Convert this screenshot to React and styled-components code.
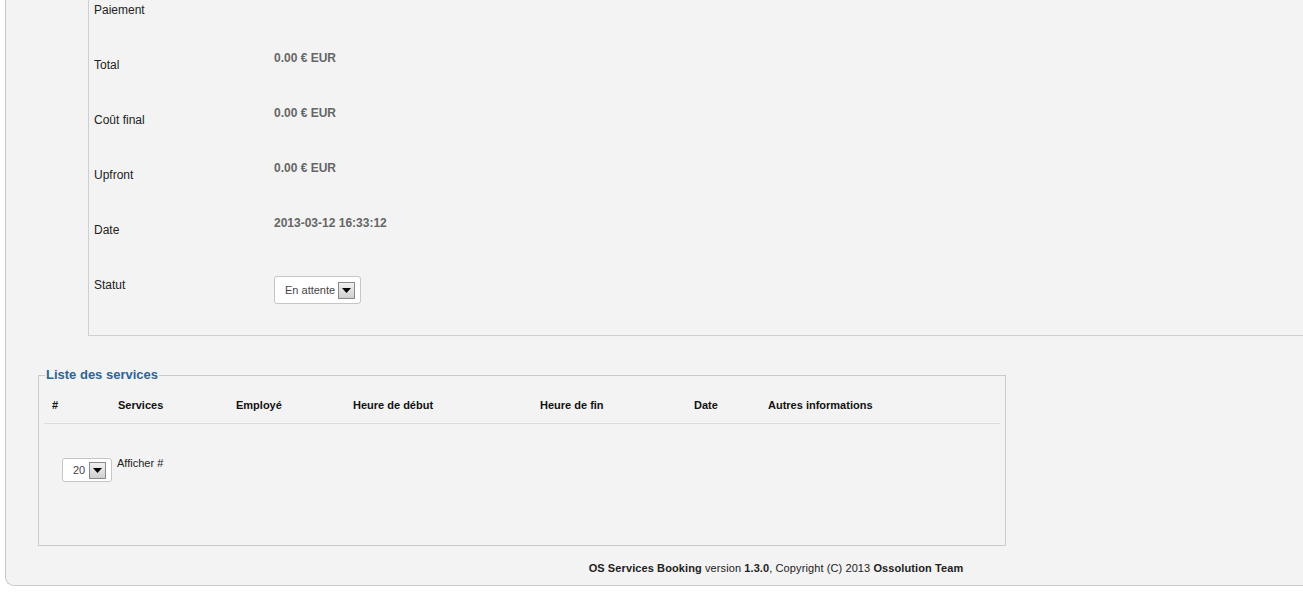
import React from 'react';
import styled, { createGlobalStyle } from 'styled-components';

const GlobalStyle = createGlobalStyle`
  html, body {
    margin: 0;
    padding: 0;
    background: #fff;
    overflow: hidden;
  }
  body {
    font-family: "Liberation Sans", Arial, sans-serif;
    color: #222;
  }
`;

const Panel = styled.div`
  margin-left: 5px;
  width: 1540px;
  background: #f3f3f3;
  border-left: 1px solid #c9c9c9;
  border-bottom: 1px solid #c9c9c9;
  border-bottom-left-radius: 9px;
  padding-bottom: 9px;
`;

const InfoBox = styled.div`
  margin-left: 82px;
  margin-top: -5px;
  border-left: 1px solid #cfcfcf;
  border-bottom: 1px solid #cfcfcf;
  padding: 0 0 10px 5px;
`;

const Row = styled.div`
  display: flex;
  height: 55px;
`;

const Label = styled.div`
  width: 180px;
  padding-top: 7px;
  font-size: 12px;
  line-height: 16px;
  color: #222;
`;

const Value = styled.div`
  font-size: 12px;
  line-height: 16px;
  font-weight: bold;
  color: #666;
`;

const SelectBox = styled.div`
  display: inline-flex;
  align-items: center;
  box-sizing: border-box;
  height: ${(p) => p.$h || 28}px;
  width: ${(p) => p.$w}px;
  margin-top: ${(p) => p.$top || 0}px;
  padding: 0 5px 0 ${(p) => p.$pl || 10}px;
  background: #fff;
  border: 1px solid #c6c6c6;
  border-radius: 3px;
  font-size: 11px;
  color: #444;
  justify-content: space-between;
`;

const Arrow = styled.span`
  box-sizing: border-box;
  width: 17px;
  height: 17px;
  border: 1px solid #8a8a8a;
  background: linear-gradient(#f0f0f0, #cfcfcf);
  display: flex;
  align-items: center;
  justify-content: center;
`;

const Fieldset = styled.fieldset`
  margin: 31px 0 0 32px;
  width: 968px;
  box-sizing: border-box;
  height: 179px;
  border: 1px solid #cacaca;
  padding: 0 5px;
  min-inline-size: 0;
`;

const Legend = styled.legend`
  font-size: 13px;
  line-height: 16px;
  font-weight: bold;
  color: #2f6496;
  padding: 0 1px;
  margin-left: 1px;
`;

const HeadRow = styled.div`
  display: grid;
  grid-template-columns: 66px 118px 117px 187px 154px 74px 1fr;
  border-bottom: 1px solid #dcdcdc;
  padding: 14px 0 10px;
`;

const HeadCell = styled.div`
  padding-left: 8px;
  font-size: 11px;
  line-height: 16px;
  font-weight: bold;
  color: #111;
`;

const Pager = styled.div`
  display: flex;
  align-items: flex-start;
  gap: 5px;
  margin: 34px 0 0 18px;
`;

const PagerLabel = styled.span`
  font-size: 11px;
  line-height: 16px;
  color: #222;
  margin-top: -3px;
`;

const Footer = styled.div`
  text-align: center;
  margin-top: 14px;
  font-size: 11px;
  line-height: 16px;
  letter-spacing: 0.1px;
  color: #222;
`;

const Caret = () => (
  <svg width="9" height="5" viewBox="0 0 9 5">
    <path d="M0 0h9L4.5 5z" fill="#000" />
  </svg>
);

const rows = [
  ['Paiement', ''],
  ['Total', '0.00 € EUR'],
  ['Coût final', '0.00 € EUR'],
  ['Upfront', '0.00 € EUR'],
  ['Date', '2013-03-12 16:33:12'],
];

const heads = ['#', 'Services', 'Employé', 'Heure de début', 'Heure de fin', 'Date', 'Autres informations'];

export default function App() {
  return (
    <>
      <GlobalStyle />
      <Panel>
        <InfoBox>
          {rows.map(([l, v]) => (
            <Row key={l}>
              <Label>{l}</Label>
              <Value>{v}</Value>
            </Row>
          ))}
          <Row>
            <Label>Statut</Label>
            <SelectBox $w={87} $top={6}>
              En attente
              <Arrow><Caret /></Arrow>
            </SelectBox>
          </Row>
        </InfoBox>
        <Fieldset>
          <Legend>Liste des services</Legend>
          <HeadRow>
            {heads.map((h) => (
              <HeadCell key={h}>{h}</HeadCell>
            ))}
          </HeadRow>
          <Pager>
            <SelectBox $w={50} $h={24} $pl={10}>
              20
              <Arrow><Caret /></Arrow>
            </SelectBox>
            <PagerLabel>Afficher #</PagerLabel>
          </Pager>
        </Fieldset>
        <Footer>
          <b>OS Services Booking</b> version <b>1.3.0</b>, Copyright (C) 2013 <b>Ossolution Team</b>
        </Footer>
      </Panel>
    </>
  );
}
